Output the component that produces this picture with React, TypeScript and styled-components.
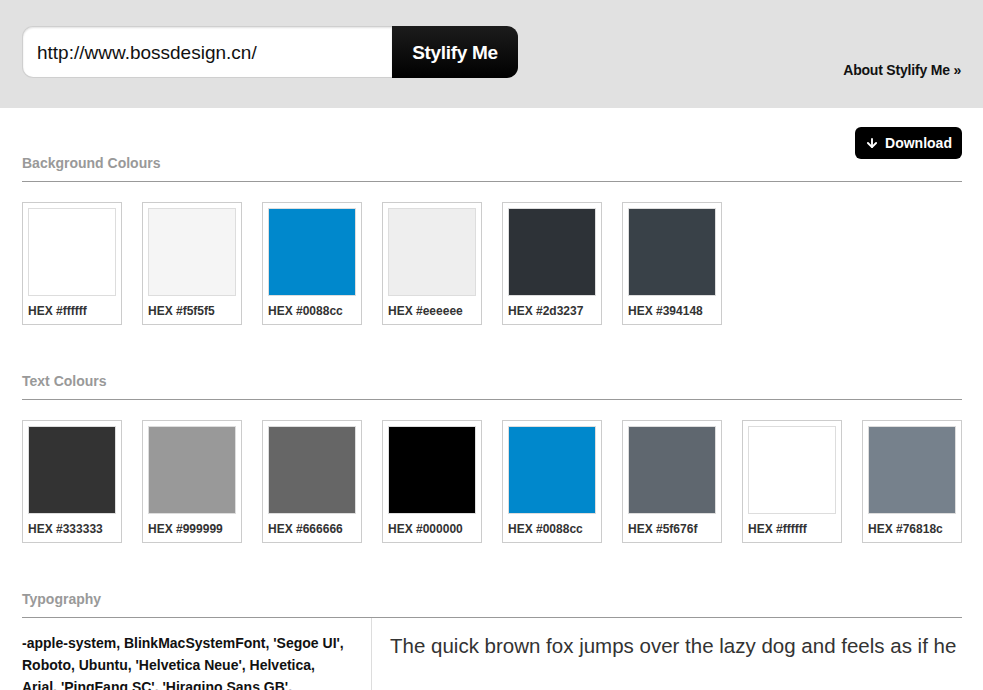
import React from "react";
import styled, { createGlobalStyle } from "styled-components";
import { ArrowDown } from "lucide-react";

const GlobalStyle = createGlobalStyle`
  html, body {
    margin: 0;
    padding: 0;
    background: #fff;
    font-family: "Liberation Sans", Helvetica, Arial, sans-serif;
    color: #333;
    overflow: hidden;
  }
`;

const Header = styled.header`
  display: flex;
  justify-content: space-between;
  background: #e1e1e1;
  padding: 26px 22px 30px;
`;

const SearchForm = styled.form`
  display: flex;
  height: 52px;
`;

const UrlInput = styled.input`
  width: 370px;
  box-sizing: border-box;
  height: 52px;
  border: 1px solid #cfcfcf;
  border-right: none;
  border-radius: 11px 0 0 11px;
  background: #fff;
  box-shadow: inset 0 1px 2px rgba(0, 0, 0, 0.12);
  padding: 2px 14px 0;
  font-family: "Liberation Sans", Helvetica, Arial, sans-serif;
  font-size: 19px;
  color: #111;
  outline: none;
`;

const SubmitButton = styled.button`
  width: 126px;
  height: 52px;
  border: none;
  border-radius: 0 11px 11px 0;
  background: linear-gradient(#1c1c1c, #000);
  color: #fff;
  font-family: "Liberation Sans", Helvetica, Arial, sans-serif;
  font-weight: bold;
  font-size: 19px;
  letter-spacing: -0.3px;
  padding-top: 2px;
  cursor: pointer;
`;

const AboutLink = styled.a`
  align-self: flex-end;
  line-height: 16px;
  font-size: 14px;
  letter-spacing: -0.2px;
  font-weight: bold;
  color: #111;
  text-decoration: none;
`;

const Main = styled.main`
  padding: 19px 21px 0 22px;
`;

const Section = styled.section`
  margin-bottom: 48px;
`;

const SectionHead = styled.div`
  display: flex;
  justify-content: space-between;
  align-items: flex-end;
  border-bottom: 1px solid #999;
  padding-bottom: 10px;
`;

const SectionTitle = styled.h2`
  margin: 0;
  font-size: 14px;
  line-height: 16px;
  font-weight: bold;
  color: #999;
`;

const DownloadButton = styled.button`
  display: flex;
  align-items: center;
  gap: 6px;
  height: 32px;
  width: 107px;
  justify-content: center;
  margin-bottom: 12px;
  border: none;
  border-radius: 6px;
  background: #000;
  color: #fff;
  font-family: "Liberation Sans", Helvetica, Arial, sans-serif;
  font-size: 14px;
  font-weight: bold;
  cursor: pointer;
`;

const SwatchRow = styled.div`
  display: flex;
  flex-wrap: wrap;
  gap: 20px;
  margin-top: 20px;
`;

const Swatch = styled.div`
  width: 100px;
  box-sizing: border-box;
  border: 1px solid #ccc;
  padding: 5px 5px 0;
`;

const Chip = styled.div<{ $color: string }>`
  width: 88px;
  height: 88px;
  box-sizing: border-box;
  background: ${(p) => p.$color};
  border: 1px solid #ddd;
`;

const HexLabel = styled.div`
  padding: 7px 0 5px;
  font-size: 12px;
  line-height: 16px;
  font-weight: bold;
  color: #333;
  white-space: nowrap;
`;

const TypeRow = styled.div`
  display: flex;
`;

const FontStack = styled.div`
  width: 350px;
  flex-shrink: 0;
  box-sizing: border-box;
  border-right: 1px solid #ddd;
  padding: 14px 20px 0 0;
  font-size: 14px;
  line-height: 22px;
  font-weight: bold;
  color: #111;
  min-height: 80px;
`;

const Sample = styled.p`
  margin: 0;
  padding: 0 0 0 18px;
  font-size: 20.5px;
  line-height: 56px;
  color: #333;
`;

const bgColours = ["#ffffff", "#f5f5f5", "#0088cc", "#eeeeee", "#2d3237", "#394148"];
const textColours = [
  "#333333",
  "#999999",
  "#666666",
  "#000000",
  "#0088cc",
  "#5f676f",
  "#ffffff",
  "#76818c",
];

function Swatches({ colours }: { colours: string[] }) {
  return (
    <SwatchRow>
      {colours.map((c, i) => (
        <Swatch key={i}>
          <Chip $color={c} />
          <HexLabel>HEX {c}</HexLabel>
        </Swatch>
      ))}
    </SwatchRow>
  );
}

export default function App() {
  return (
    <>
      <GlobalStyle />
      <Header>
        <SearchForm onSubmit={(e) => e.preventDefault()}>
          <UrlInput defaultValue="http://www.bossdesign.cn/" />
          <SubmitButton type="submit">Stylify Me</SubmitButton>
        </SearchForm>
        <AboutLink href="#">About Stylify Me »</AboutLink>
      </Header>
      <Main>
        <Section>
          <SectionHead>
            <SectionTitle>Background Colours</SectionTitle>
            <DownloadButton>
              <ArrowDown size={14} strokeWidth={3.2} />
              Download
            </DownloadButton>
          </SectionHead>
          <Swatches colours={bgColours} />
        </Section>
        <Section>
          <SectionHead>
            <SectionTitle>Text Colours</SectionTitle>
          </SectionHead>
          <Swatches colours={textColours} />
        </Section>
        <Section>
          <SectionHead>
            <SectionTitle>Typography</SectionTitle>
          </SectionHead>
          <TypeRow>
            <FontStack>
              -apple-system, BlinkMacSystemFont, 'Segoe UI', Roboto, Ubuntu, 'Helvetica Neue',
              Helvetica, Arial, 'PingFang SC', 'Hiragino Sans GB', 'Microsoft YaHei', sans-serif
            </FontStack>
            <Sample>
              The quick brown fox jumps over the lazy dog and feels as if he were in the seventh
              heaven of typography together with Hermann Zapf.
            </Sample>
          </TypeRow>
        </Section>
      </Main>
    </>
  );
}
